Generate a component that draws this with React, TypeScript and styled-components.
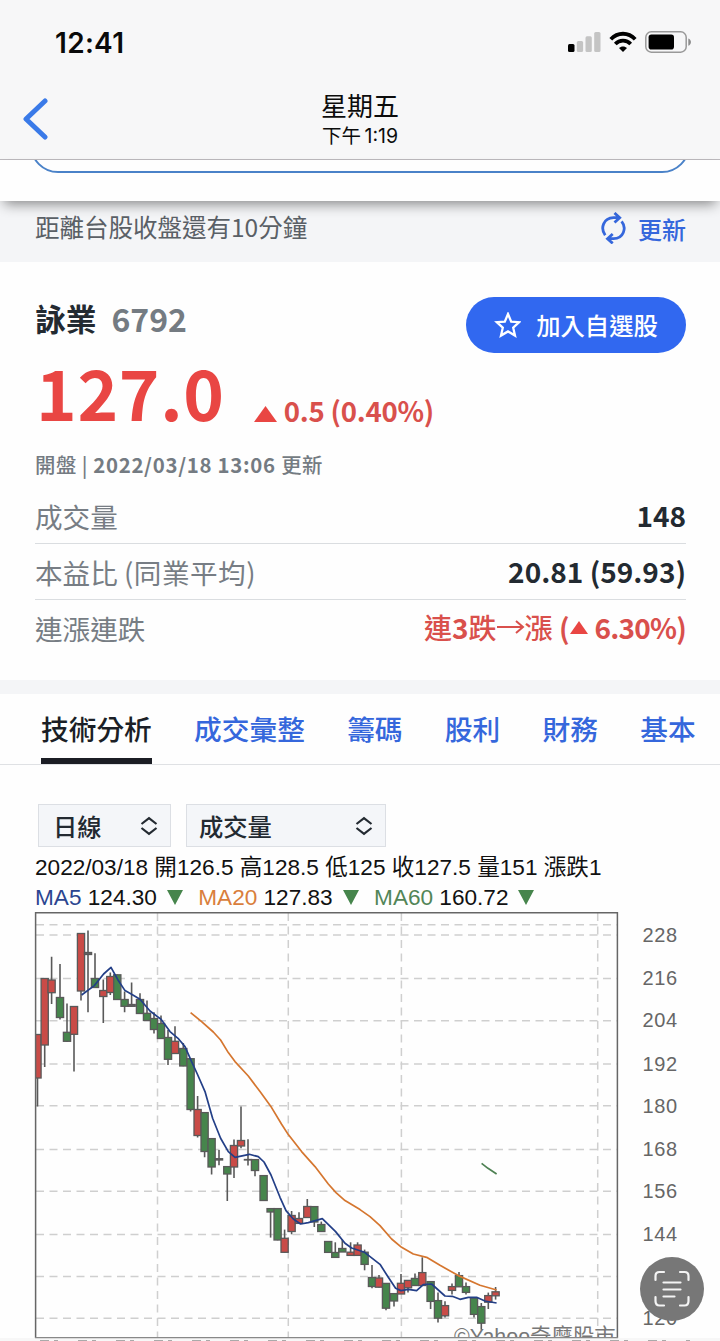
import React from 'react';
import styled, { createGlobalStyle } from 'styled-components';

const GlobalStyle = createGlobalStyle`
  * { box-sizing: border-box; }
  body {
    margin: 0;
    background: #fefefe;
    font-family: "Noto Sans CJK TC", sans-serif;
    color: #232a31;
    overflow: hidden;
  }
  svg { display: block; flex: none; }
`;

const Screen = styled.main`
  width: 720px;
  height: 1341px;
  overflow: hidden;
  display: flex;
  flex-direction: column;
  background: #fefefe;
  white-space: nowrap;
`;

const TopBar = styled.header`
  height: 160px;
  flex: none;
  background: #f7f7f8;
  border-bottom: 1.5px solid #bcb9bd;
  display: flex;
  flex-direction: column;
`;

const StatusBar = styled.div`
  height: 84px;
  padding: 0 28px 0 55px;
  display: flex;
  align-items: center;
  justify-content: space-between;
`;

const Clock = styled.span`
  padding-top: 1px;
  font: 600 28px/34px Inter, sans-serif;
  letter-spacing: 0.3px;
  color: #0a0a0a;
`;

const StatusIcons = styled.div`
  display: flex;
  align-items: center;
  gap: 8px;
`;

const NavBar = styled.div`
  flex: 1;
  display: grid;
  grid-template-columns: 60px 1fr 60px;
  padding: 6px 0 0;
`;

const BackButton = styled.button`
  border: 0;
  background: none;
  padding: 8px 0 0 22px;
  align-self: start;
`;

const NavTitle = styled.div`
  text-align: center;
  color: #0c0c0c;
`;

const Weekday = styled.div`
  font: 400 26px/34px Inter, "Noto Sans CJK TC", sans-serif;
`;

const TimeLabel = styled.div`
  font: 400 19.5px/24px Inter, "Noto Sans CJK TC", sans-serif;
  word-spacing: -2px;
`;

const SearchArea = styled.div`
  position: relative;
  z-index: 1;
  height: 41px;
  flex: none;
  background: #fefefe;
  box-shadow: 0 7px 13px -4px rgba(0, 0, 0, 0.46);
  padding: 0 30px;
`;

const SearchClip = styled.div`
  height: 13px;
  overflow: hidden;
  display: flex;
  align-items: flex-end;
`;

const SearchField = styled.div`
  flex: 1;
  height: 56px;
  border: 2px solid #4a82c8;
  border-radius: 28px;
`;

const Notice = styled.div`
  height: 61px;
  flex: none;
  padding: 0 34px 8px 35px;
  background: #f4f5f7;
  display: flex;
  align-items: center;
  justify-content: space-between;
  color: #5a6066;
`;

const NoticeText = styled.span`
  padding-bottom: 2px;
  font: 400 24.5px/36px "Noto Sans CJK TC", sans-serif;
`;

const RefreshButton = styled.button`
  border: 0;
  padding: 0;
  background: none;
  display: flex;
  align-items: center;
  gap: 12px;
  color: #3567dc;
  font: 500 24px/30px "Noto Sans CJK TC", sans-serif;
`;

const RefreshLabel = styled.span`
  padding-top: 2px;
`;

const Quote = styled.section`
  height: 418px;
  flex: none;
  padding: 34px 34px 0 35px;
  display: flex;
  flex-direction: column;
`;

const NameRow = styled.div`
  height: 56px;
  display: flex;
  justify-content: space-between;
  align-items: flex-start;
`;

const StockName = styled.h1`
  margin: 0;
  display: flex;
  align-items: center;
  height: 43px;
  font: 700 30.7px/43px "Noto Sans CJK TC", sans-serif;
`;

const StockCode = styled.span`
  margin-left: 15px;
  font-size: 32px;
  line-height: 42px;
  color: #747b82;
`;

const WatchButton = styled.button`
  width: 220px;
  height: 56px;
  margin-top: 1px;
  padding: 0 0 1px;
  border: 0;
  border-radius: 28px;
  background: #3168f0;
  color: #fff;
  display: flex;
  align-items: center;
  justify-content: center;
  gap: 15px;
  font: 500 24.3px/36px "Noto Sans CJK TC", sans-serif;
`;

const PriceRow = styled.div`
  height: 91px;
  padding-left: 1px;
  display: flex;
  align-items: baseline;
  color: #e94643;
`;

const Price = styled.span`
  font: 700 69px/79px "Noto Sans CJK TC", sans-serif;
  letter-spacing: 0.7px;
`;

const Change = styled.span`
  position: relative;
  top: 1px;
  display: flex;
  align-items: baseline;
  gap: 7px;
  margin-left: 29px;
  font: 700 27.6px/36px "Noto Sans CJK TC", sans-serif;
  letter-spacing: -0.25px;
  color: #d9504c;
`;

const UpdatedAt = styled.div`
  height: 45px;
  font: 700 20.4px/42px "Noto Sans CJK TC", sans-serif;
  letter-spacing: 0.5px;
  color: #747b82;
`;

const Medium = styled.span`
  font-weight: 500;
`;

const DateLabel = styled.span`
  letter-spacing: 0.7px;
`;

const Facts = styled.dl`
  margin: 0;
`;

const Fact = styled.div`
  height: 56px;
  display: flex;
  align-items: center;
  justify-content: space-between;
  border-bottom: 1.5px solid #dadde0;
  &:last-child { border-bottom-color: transparent; }
`;

const FactLabel = styled.dt`
  font: 400 27.6px/40px "Noto Sans CJK TC", sans-serif;
  color: #777d84;
`;

const Parenthesized = styled.span`
  letter-spacing: 0.5px;
`;

const FactValue = styled.dd<{ $up?: boolean }>`
  margin: 0;
  padding-bottom: 1px;
  display: flex;
  align-items: center;
  font: 700 28px/40px "Noto Sans CJK TC", sans-serif;
  color: ${p => (p.$up ? '#d9504c' : '#232a31')};
`;

const Divider = styled.div`
  height: 14px;
  flex: none;
  background: #f4f5f7;
`;

const Tabs = styled.nav`
  height: 71px;
  flex: none;
  display: flex;
  gap: 42.3px;
  padding-left: 41px;
  border-bottom: 1.5px solid #dfe1e4;
`;

const Tab = styled.a<{ $active?: boolean }>`
  height: 70px;
  flex: none;
  font: 500 27.7px/69px "Noto Sans CJK TC", sans-serif;
  color: ${p => (p.$active ? '#1b1f26' : '#3567dc')};
  border-bottom: ${p => (p.$active ? '6px solid #1b1d24' : '0')};
`;

const Controls = styled.div`
  flex: none;
  display: flex;
  gap: 15px;
  padding: 39px 0 0 38px;
`;

const Select = styled.div<{ $width: number }>`
  width: ${p => p.$width}px;
  height: 43px;
  padding: 0 12px 0 ${p => (p.$width > 150 ? 12 : 14)}px;
  border: 1.5px solid #dcdfe4;
  background: #f4f6f9;
  display: flex;
  align-items: center;
  justify-content: space-between;
  font: 500 24.3px/38px "Noto Sans CJK TC", sans-serif;
`;

const Readout = styled.div`
  flex: none;
  padding: 6px 0 0 35px;
  font: 400 22.6px/30px "Liberation Sans", "Noto Sans CJK TC", sans-serif;
  color: #111;
`;

const ReadoutLine = styled.div`
  height: 29.5px;
  display: flex;
  align-items: center;
`;

const Average = styled.span`
  display: flex;
  align-items: center;
  gap: 10px;
  margin-right: 15.4px;
  padding-top: 1px;
`;

const Tint = styled.span<{ $color: string }>`
  color: ${p => p.$color};
`;

const ScanButton = styled.button`
  position: absolute;
  left: 640px;
  top: 1257px;
  width: 64px;
  height: 64px;
  padding: 0;
  border: 0;
  border-radius: 50%;
  background: #777;
  display: grid;
  place-items: center;
`;

type Candle = [x: number, high: number, top: number, bottom: number, low: number, kind: 'r' | 'g' | 'd'];

const candles: Candle[] = [
  [37.5, 1034, 1034.5, 1078, 1106.5, 'r'],
  [44.7, 978, 978.5, 1045, 1067, 'r'],
  [51.6, 956.7, 980, 992.7, 1004, 'r'],
  [60, 964, 997.5, 1017.5, 1019.6, 'g'],
  [67, 1003.6, 1032.3, 1041.3, 1042, 'g'],
  [74, 1006, 1006.5, 1034.3, 1071.6, 'r'],
  [81, 933, 933.5, 991, 1000.6, 'r'],
  [88, 930.6, 952.5, 954.5, 1012.3, 'd'],
  [95, 953.3, 978.5, 987.5, 988, 'g'],
  [103.3, 979.6, 990.5, 996.5, 1023, 'r'],
  [110.3, 972.6, 976.5, 992.5, 995, 'r'],
  [117.3, 974.5, 974.8, 999.5, 999.6, 'g'],
  [124.6, 991.6, 999.5, 1006.3, 1012.3, 'g'],
  [131.6, 982.6, 1004.5, 1006.3, 1006.6, 'd'],
  [140, 993.3, 999.5, 1013.5, 1013.6, 'g'],
  [147, 1000.6, 1013.3, 1020.5, 1020.6, 'g'],
  [154, 1012.3, 1018.5, 1029.5, 1033.6, 'g'],
  [161, 1015.6, 1023.5, 1038.5, 1038.6, 'g'],
  [168, 1030, 1037.5, 1059.3, 1065, 'g'],
  [175, 1026.3, 1041.3, 1053.5, 1053.6, 'r'],
  [183.3, 1043, 1048.5, 1066, 1066.3, 'g'],
  [190.6, 1058.5, 1058.7, 1109.5, 1111.6, 'g'],
  [197.6, 1096, 1109.5, 1135.5, 1137.6, 'r'],
  [204.6, 1112.5, 1112.6, 1151.5, 1157.3, 'g'],
  [211.6, 1138.5, 1138.6, 1167, 1174.6, 'g'],
  [219, 1150, 1158.7, 1160, 1165.3, 'd'],
  [227.3, 1166.5, 1166.6, 1174, 1201, 'g'],
  [234, 1139.6, 1145.5, 1167, 1178, 'r'],
  [241, 1106.6, 1140.5, 1146, 1148.3, 'r'],
  [248, 1139.3, 1159.5, 1160, 1165.6, 'd'],
  [255, 1159.5, 1159.6, 1170.5, 1176.3, 'g'],
  [263.6, 1175.5, 1175.6, 1200.5, 1201, 'g'],
  [270.6, 1208.5, 1208.6, 1212, 1237.6, 'g'],
  [277.6, 1208.5, 1208.6, 1240, 1240.3, 'g'],
  [284.6, 1229.6, 1238.3, 1252.3, 1252.6, 'r'],
  [291.6, 1211, 1215.5, 1231.5, 1234.3, 'r'],
  [299, 1212.3, 1218.5, 1223.4, 1223.6, 'r'],
  [307.3, 1199, 1206.5, 1217.5, 1217.6, 'r'],
  [314.3, 1206.5, 1206.6, 1222, 1227, 'g'],
  [321.3, 1221.6, 1224.5, 1231.5, 1231.6, 'g'],
  [328.2, 1241.4, 1241.5, 1252.4, 1252.6, 'g'],
  [335.3, 1242.3, 1252.5, 1257.4, 1257.6, 'g'],
  [342.3, 1239.6, 1248.5, 1252, 1252, 'g'],
  [350.6, 1242.3, 1252.2, 1255.4, 1255.6, 'r'],
  [357.6, 1242.3, 1245, 1255.4, 1255.6, 'r'],
  [364.6, 1249.6, 1252.2, 1264.4, 1270.3, 'g'],
  [372, 1265, 1277.5, 1286.5, 1288.3, 'g'],
  [379, 1275, 1278, 1287.2, 1287.6, 'r'],
  [386, 1283.2, 1283.4, 1308.2, 1310.3, 'g'],
  [394, 1293.4, 1293.6, 1301, 1306.6, 'g'],
  [401, 1274, 1283.3, 1294, 1294, 'r'],
  [408, 1280, 1280.4, 1287.8, 1292.6, 'r'],
  [415, 1273.6, 1278.4, 1285.5, 1285.6, 'g'],
  [422.3, 1257.3, 1272.6, 1285.5, 1285.6, 'r'],
  [430.6, 1281.4, 1281.6, 1301.4, 1309, 'g'],
  [438, 1292.6, 1300.6, 1318.2, 1322.6, 'g'],
  [445, 1301.3, 1305.6, 1315.8, 1317.6, 'r'],
  [452, 1283.6, 1286.6, 1290.4, 1294.6, 'r'],
  [459, 1272, 1275.6, 1286.8, 1287, 'g'],
  [466, 1282.6, 1286.6, 1292.4, 1294.6, 'g'],
  [474, 1297.8, 1298, 1314.4, 1317.6, 'g'],
  [481.3, 1303, 1306.6, 1323.2, 1329.6, 'g'],
  [488.3, 1292.6, 1295.6, 1302.2, 1309, 'r'],
  [495.6, 1287, 1291.8, 1295.8, 1299.6, 'r'],
];

const ma5 =
  '81.6,995 94.3,985.6 103.6,974 111,967.3 118,980 125,990.6 131.6,994.3 140,999.3 150,1011 161,1019.3 170,1031.6 178,1038.3 185,1046.6 191.6,1061.6 197.3,1074 205,1091.6 212.6,1118.3 220.6,1138.3 228.3,1151.6 235,1157.3 249.3,1154.3 258.3,1156.6 264,1162 271,1175 280,1197.3 286,1210.6 293.3,1219 300.6,1224 308.3,1222.6 322.3,1218.6 335.6,1231.6 345,1243.3 351.6,1248 364.6,1252.3 380,1264.3 388.3,1277.3 395.6,1288.3 401,1290.6 408.3,1289.3 416.6,1290.6 423.3,1284.6 431.6,1284 445,1296 452.3,1296.3 460,1299.3 468.3,1297.3 476.6,1297.3 485,1301 496.6,1303';
const ma20 =
  '190.6,1012.6 201.6,1021.6 213.3,1032 220.6,1040 228.3,1052.6 235,1061.6 248.3,1076 260,1091.6 271.6,1107.6 281.6,1124.3 288.3,1134.6 301.6,1151.6 315,1166.6 328.3,1184 336,1192.6 345,1200.6 360,1209.6 370,1216.6 380,1225.6 391.6,1239 401.6,1247.3 413.3,1254 426.6,1257.3 440,1265.3 458.3,1275.6 480,1285.3 496.6,1290';

const gridRows = [924.7, 935, 978.6, 1020.7, 1064, 1105.8, 1149.4, 1191.2, 1234.6, 1276.4, 1318.3];
const gridColumns = [157.5, 288.3, 401.4, 597.7];
const axis: [number, number][] = [
  [228, 935], [216, 978.6], [204, 1020.7], [192, 1064], [180, 1105.8],
  [168, 1149.4], [156, 1191.2], [144, 1234.6], [120, 1318.3],
];

const fills = { r: '#c94b47', g: '#46854c', d: '#666' };

const PriceChart = () => (
  <svg width="720" height="429" viewBox="0 912 720 429" fontFamily='"Liberation Sans", "Noto Sans CJK TC", sans-serif'>
    <g stroke="#cfcfcf" strokeWidth="1.5" strokeDasharray="8 5.5">
      {gridRows.map(y => <line key={y} x1="36" x2="617" y1={y} y2={y} />)}
      {gridColumns.map(x => <line key={x} x1={x} x2={x} y1="913" y2="1337" />)}
    </g>
    <text x="454" y="1344" fontSize="21.4" fill="#777">©Yahoo奇摩股市</text>
    <rect x="0" y="1338" width="720" height="3" fill="#f7f7f7" />
    <path d="M40 1340.5H690" stroke="#aaa" strokeWidth="1" strokeDasharray="9 5 4 20" />
    <clipPath id="plot"><rect x="35.5" y="912" width="582" height="425" /></clipPath>
    <g clipPath="url(#plot)" stroke="#595959" strokeWidth="1.3">
      {candles.map(([x, high, top, bottom, low, kind]) => (
        <g key={x}>
          <line x1={x} x2={x} y1={high} y2={low} strokeWidth="1.6" />
          <rect x={x - 3.6} y={top} width="7.2" height={bottom - top} fill={fills[kind]} />
        </g>
      ))}
    </g>
    <g fill="none" strokeWidth="1.7" strokeLinejoin="round">
      <polyline points={ma5} stroke="#233f87" />
      <polyline points={ma20} stroke="#d5762f" />
      <polyline points="481.6,1163.3 488,1168.3 496.6,1174" stroke="#4e8153" />
    </g>
    <path d="M35.6 1338V912.7H617.4V1338" fill="none" stroke="#666" strokeWidth="1.5" />
    <path d="M35 1337.7H618" stroke="#888" strokeWidth="1.3" />
    <g fontSize="20" fill="#666">
      {axis.map(([value, y]) => (
        <text key={value} x="642.5" y={y + 6.7} textLength="34.5" lengthAdjust="spacing">{value}</text>
      ))}
    </g>
  </svg>
);

const SortIcon = () => (
  <svg width="18" height="20" viewBox="0 0 18 20" fill="none" stroke="#232a31" strokeWidth="2.2">
    <path d="M1.5 8 9 2.2 16.5 8M1.5 12 9 17.8l7.5-5.8" />
  </svg>
);

const Triangle = ({ w, h, color, down }: { w: number; h: number; color: string; down?: boolean }) => (
  <svg width={w} height={h} viewBox="0 0 10 10" preserveAspectRatio="none" fill={color}>
    <path d={down ? 'M0 0H10L5 10Z' : 'M0 10 5 0l5 10Z'} />
  </svg>
);

const Percent = styled.span`
  margin-left: 7px;
  letter-spacing: -0.8px;
`;

const Arrow = () => (
  <svg width="28" height="20" viewBox="0 0 28 20" fill="none" stroke="#d9504c" strokeWidth="2">
    <path d="M0 10H26M19 4 26 10 19 16" />
  </svg>
);

const TABS = ['技術分析', '成交彙整', '籌碼', '股利', '財務', '基本'];

export default function App() {
  return (
    <Screen>
      <GlobalStyle />
      <TopBar>
        <StatusBar>
          <Clock>12:41</Clock>
          <StatusIcons>
            <svg width="34" height="22" viewBox="0 0 34 22">
              <rect x="1" y="13" width="6.5" height="8" rx="1.5" fill="#000" />
              <rect x="9.8" y="10" width="6.3" height="11" rx="1.5" fill="#c4c4c4" />
              <rect x="18.5" y="5.3" width="6.3" height="15.7" rx="1.5" fill="#c4c4c4" />
              <rect x="27.2" y="1" width="6.3" height="20" rx="1.5" fill="#c4c4c4" />
            </svg>
            <svg width="28" height="22" viewBox="0 0 28 22" fill="none" stroke="#000" strokeWidth="3.8">
              <path d="M1.8 8.2C8.6 .9 19.4 .9 26.2 8.2" />
              <path d="M6.3 13C10.4 8.6 17.6 8.6 21.7 13" strokeWidth="3.7" />
              <path d="M14 21 10 17.1C12.1 14.9 15.9 14.9 18 17.1Z" fill="#000" stroke="none" />
            </svg>
            <svg width="47" height="22" viewBox="0 0 47 22">
              <rect x="0.8" y="0.8" width="40.4" height="20.4" rx="5.5" fill="none" stroke="#999" strokeWidth="1.5" />
              <rect x="3.6" y="3.6" width="25.4" height="15" rx="2.8" fill="#000" />
              <path d="M43.3 7.5C46.8 8.5 46.8 13.7 43.3 14.7Z" fill="#8c8c8c" />
            </svg>
          </StatusIcons>
        </StatusBar>
        <NavBar>
          <BackButton aria-label="back">
            <svg width="26" height="42" viewBox="0 0 26 42" fill="none" stroke="#3a7ae8" strokeWidth="5" strokeLinecap="round" strokeLinejoin="round">
              <path d="M23 3 4 21l19 18" />
            </svg>
          </BackButton>
          <NavTitle>
            <Weekday>星期五</Weekday>
            <TimeLabel>下午 1:19</TimeLabel>
          </NavTitle>
        </NavBar>
      </TopBar>

      <SearchArea>
        <SearchClip><SearchField /></SearchClip>
      </SearchArea>

      <Notice>
        <NoticeText>距離台股收盤還有10分鐘</NoticeText>
        <RefreshButton>
          <svg width="25" height="32" viewBox="0 0 25 32" fill="none" stroke="#3567dc" strokeWidth="2.8">
            <path d="M4.200 23.200C-1 16 2.500 6 12.500 5.700H18M13.500 1l5.200 4.700-5.200 4.900" />
            <path d="M20.600 9.300C26 16 22.500 26.500 12.500 26.700H7M11.700 22l-5.200 4.700 5.200 4.700" />
          </svg>
          <RefreshLabel>更新</RefreshLabel>
        </RefreshButton>
      </Notice>

      <Quote>
        <NameRow>
          <StockName>詠業<StockCode>6792</StockCode></StockName>
          <WatchButton>
            <svg width="27" height="26" viewBox="0 0 27 26" fill="none" stroke="#fff" strokeWidth="2.3">
              <path d="M14 2 17.200 9.600 25.200 10.200 19.200 15.700 21 23.600 14 19.400 7 23.600 8.800 15.700 2.800 10.200 10.800 9.600Z" />
            </svg>
            加入自選股
          </WatchButton>
        </NameRow>
        <PriceRow>
          <Price>127.0</Price>
          <Change><Triangle w={23} h={16} color="#e94643" />0.5 (0.40%)</Change>
        </PriceRow>
        <UpdatedAt><Medium>開盤 | </Medium><DateLabel>2022/03/18 13:06 </DateLabel><Medium>更新</Medium></UpdatedAt>
        <Facts>
          <Fact><FactLabel>成交量</FactLabel><FactValue>148</FactValue></Fact>
          <Fact><FactLabel>本益比 <Parenthesized>(同業平均)</Parenthesized></FactLabel><FactValue>20.81 (59.93)</FactValue></Fact>
          <Fact>
            <FactLabel>連漲連跌</FactLabel>
            <FactValue $up>
              <Medium>連</Medium>3<Medium>跌</Medium><Arrow /><Medium>漲</Medium>&nbsp;(
              <Triangle w={18} h={13} color="#e94643" /><Percent>6.30%)</Percent>
            </FactValue>
          </Fact>
        </Facts>
      </Quote>

      <Divider />
      <Tabs>
        {TABS.map((name, i) => <Tab key={name} $active={i === 0}>{name}</Tab>)}
      </Tabs>

      <Controls>
        <Select $width={133}>日線<SortIcon /></Select>
        <Select $width={200}>成交量<SortIcon /></Select>
      </Controls>

      <Readout>
        <ReadoutLine>2022/03/18 開126.5 高128.5 低125 收127.5 量151 漲跌1</ReadoutLine>
        <ReadoutLine>
          <Average><span><Tint $color="#2b4590">MA5</Tint> 124.30</span><Triangle w={16} h={15} color="#46854c" down /></Average>
          <Average><span><Tint $color="#d97e3c">MA20</Tint> 127.83</span><Triangle w={16} h={15} color="#46854c" down /></Average>
          <Average><span><Tint $color="#528557">MA60</Tint> 160.72</span><Triangle w={16} h={15} color="#46854c" down /></Average>
        </ReadoutLine>
      </Readout>

      <PriceChart />
      <ScanButton aria-label="scan text">
        <svg width="36" height="38" viewBox="0 0 36 38" fill="none" stroke="#f4f4f4" strokeWidth="2.2" strokeLinecap="round">
          <path d="M1.5 10V6Q1.5 2 5.5 2H10M26 2h4.500Q34.500 2 34.500 6v4M34.500 27v4Q34.500 35.500 30.500 35.500H26M10 35.500H5.500Q1.500 35.500 1.500 31V27" />
          <path d="M9.500 12.500H26.500M9.500 19.500H26.500M9.500 26.500H20.500" />
        </svg>
      </ScanButton>
    </Screen>
  );
}
